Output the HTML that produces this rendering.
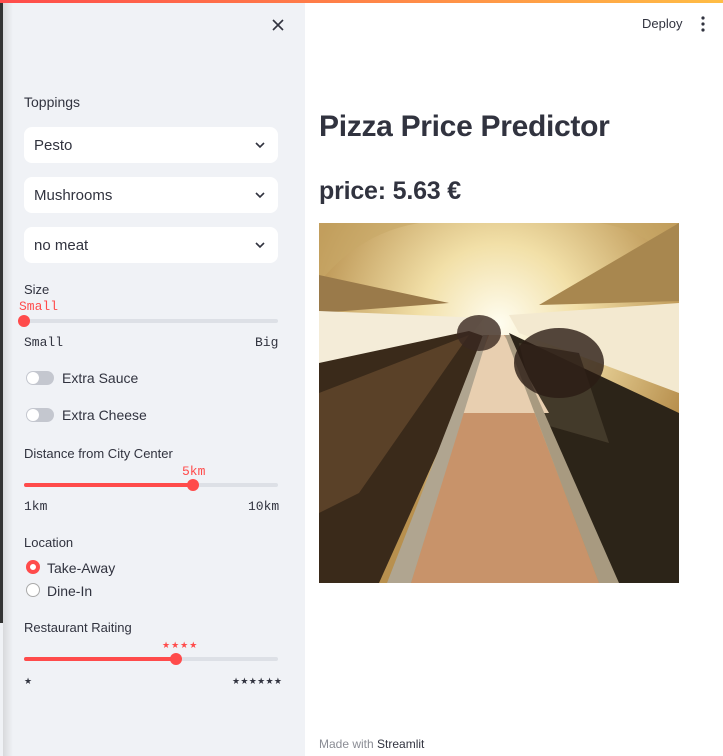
<!DOCTYPE html>
<html><head><meta charset="utf-8"><style>
*{margin:0;padding:0;box-sizing:border-box}
body{width:723px;height:756px;overflow:hidden;background:#fff;font-family:"Liberation Sans",sans-serif;color:#31333f;position:relative}
.topbar{position:absolute;left:0;top:0;width:723px;height:3px;background:linear-gradient(90deg,#ff4b4b,#ffbd45)}
.side{position:absolute;left:0;top:3px;width:305px;height:753px;background:#f0f2f6}
.edge{position:absolute;left:0;top:3px;width:3px;height:620px;background:#333}
.edge2{position:absolute;left:3px;top:3px;width:10px;height:753px;background:linear-gradient(90deg,#d8d9dc,#f0f2f6)}
.abs{position:absolute}
.lbl{font-size:13px;color:#31333f}
.sel{position:absolute;left:24px;width:254px;height:36px;background:#fff;border-radius:8px;font-size:15px;padding:10px 0 0 10px}
.sel svg{position:absolute;right:13px;top:15px}
.mono{font-family:"Liberation Mono",monospace;font-size:13px}
.track{position:absolute;left:24px;width:254px;height:4px;background:#dde0e6;border-radius:2px}
.fill{position:absolute;left:0;top:0;height:4px;background:#ff4b4b;border-radius:2px}
.knob{position:absolute;width:12px;height:12px;border-radius:50%;background:#ff4b4b;top:-4px}
.tog{position:absolute;left:26px;width:28px;height:14px;border-radius:7px;background:#c4c7cf}
.tog:after{content:"";position:absolute;left:1px;top:1px;width:12px;height:12px;border-radius:50%;background:#fff}
</style></head><body>
<div class="side"></div><div class="edge2"></div><div class="edge"></div>
<div class="topbar"></div>
<svg class="abs" style="left:272px;top:19px" width="12" height="12"><path d="M1 1L11 11M11 1L1 11" stroke="#31333f" stroke-width="1.6"/></svg>
<div class="abs" style="left:24px;top:94px;font-size:14px">Toppings</div>
<div class="sel" style="top:127px">Pesto<svg width="10" height="7"><path d="M1 1L5 5L9 1" stroke="#31333f" stroke-width="1.6" fill="none"/></svg></div>
<div class="sel" style="top:177px">Mushrooms<svg width="10" height="7"><path d="M1 1L5 5L9 1" stroke="#31333f" stroke-width="1.6" fill="none"/></svg></div>
<div class="sel" style="top:227px">no meat<svg width="10" height="7"><path d="M1 1L5 5L9 1" stroke="#31333f" stroke-width="1.6" fill="none"/></svg></div>
<div class="abs lbl" style="left:24px;top:282px">Size</div>
<div class="abs mono" style="left:19px;top:299px;color:#ff4b4b">Small</div>
<div class="track" style="top:319px"><div class="knob" style="left:-6px"></div></div>
<div class="abs mono" style="left:24px;top:335px">Small</div>
<div class="abs mono" style="left:255px;top:335px">Big</div>
<div class="tog" style="top:371px"></div><div class="abs" style="left:62px;top:370px;font-size:14px">Extra Sauce</div>
<div class="tog" style="top:408px"></div><div class="abs" style="left:62px;top:407px;font-size:14px">Extra Cheese</div>
<div class="abs lbl" style="left:24px;top:446px">Distance from City Center</div>
<div class="abs mono" style="left:182px;top:464px;color:#ff4b4b">5km</div>
<div class="track" style="top:483px"><div class="fill" style="width:169px"></div><div class="knob" style="left:163px"></div></div>
<div class="abs mono" style="left:24px;top:499px">1km</div>
<div class="abs mono" style="left:248px;top:499px">10km</div>
<div class="abs lbl" style="left:24px;top:535px">Location</div>
<div class="abs" style="left:26px;top:560px;width:14px;height:14px;border-radius:50%;border:4px solid #ff4b4b;background:#fff"></div>
<div class="abs" style="left:47px;top:560px;font-size:14px">Take-Away</div>
<div class="abs" style="left:26px;top:583px;width:14px;height:14px;border-radius:50%;border:1px solid #aaa;background:#fff"></div>
<div class="abs" style="left:47px;top:583px;font-size:14px">Dine-In</div>
<div class="abs lbl" style="left:24px;top:620px">Restaurant Raiting</div>
<div class="abs" style="left:162px;top:640px;color:#ff4b4b;font-size:9px;letter-spacing:1px">★★★★</div>
<div class="track" style="top:657px"><div class="fill" style="width:152px"></div><div class="knob" style="left:146px"></div></div>
<div class="abs" style="left:24px;top:676px;font-size:9px">★</div>
<div class="abs" style="left:232px;top:676px;font-size:9px;letter-spacing:0.3px">★★★★★★</div>

<div class="abs" style="left:642px;top:16px;font-size:13px">Deploy</div>
<svg class="abs" style="left:701px;top:16px" width="4" height="16"><circle cx="2" cy="2" r="1.6" fill="#31333f"/><circle cx="2" cy="8" r="1.6" fill="#31333f"/><circle cx="2" cy="14" r="1.6" fill="#31333f"/></svg>
<div class="abs" style="left:319px;top:110px;font-size:30px;font-weight:bold;color:#31333f;letter-spacing:-0.3px">Pizza Price Predictor</div>
<div class="abs" style="left:319px;top:177px;font-size:25px;font-weight:bold;letter-spacing:-0.2px">price: 5.63 €</div>

<svg class="abs" style="left:319px;top:223px" width="360" height="360" viewBox="0 0 360 360">
<defs><radialGradient id="c" cx="0.5" cy="0.28" r="0.55"><stop offset="0" stop-color="#fffdf0"/><stop offset="0.4" stop-color="#f2e0a8"/><stop offset="1" stop-color="#b8904e"/></radialGradient></defs>
<rect width="360" height="360" fill="url(#c)"/>
<path d="M0,0 L0,60 Q40,10 100,0 Z" fill="#c8a868" opacity="0.6"/>
<path d="M360,0 L360,40 Q320,5 280,0 Z" fill="#c8a868" opacity="0.6"/>
<polygon points="0,52 130,80 0,90" fill="#9a7a4a"/>
<polygon points="360,0 220,82 360,78" fill="#a8874f"/>
<polygon points="0,88 165,95 150,115 0,150" fill="#f4ecd8"/>
<polygon points="360,80 190,92 200,110 360,170" fill="#f3e9d0"/>
<polygon points="0,140 150,108 170,115 60,360 0,360" fill="#3a2a1a"/>
<polygon points="0,170 150,112 40,270 0,290" fill="#5a4128"/>
<polygon points="190,110 360,190 360,360 290,360" fill="#2c2418"/>
<polygon points="200,120 260,130 290,220 220,200" fill="#4a4030" opacity="0.8"/>
<polygon points="168,112 186,112 280,360 92,360" fill="#c8936a"/>
<polygon points="170,112 185,112 230,190 140,190" fill="#e8cfb0"/>
<polygon points="164,112 169,112 92,360 68,360" fill="#b0a590"/>
<polygon points="186,112 191,112 300,360 280,360" fill="#a89a80"/>
<ellipse cx="160" cy="110" rx="22" ry="18" fill="#3a2820" opacity="0.8"/>
<ellipse cx="240" cy="140" rx="45" ry="35" fill="#2a1c14" opacity="0.8"/>
</svg>
<div class="abs" style="left:319px;top:737px;font-size:12px;color:#8a8c94">Made with <span style="color:#31333f">Streamlit</span></div>
</body></html>
